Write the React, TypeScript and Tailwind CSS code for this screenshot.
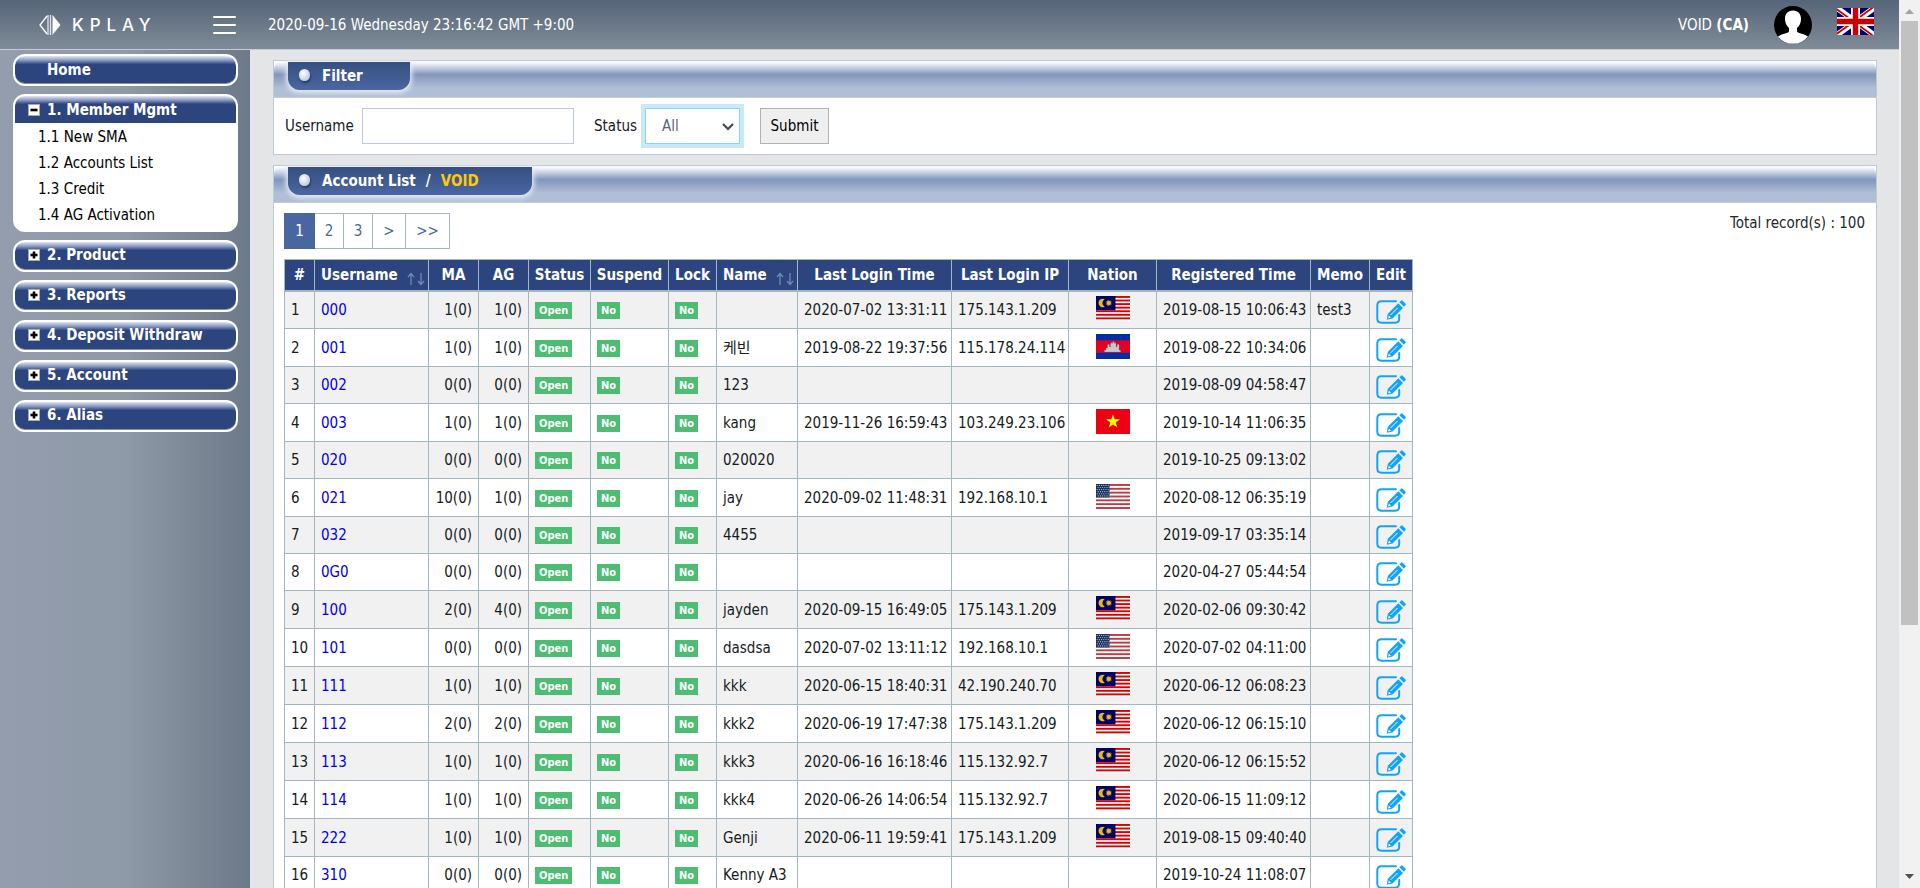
import React from "react";

type Nation = "my" | "kh" | "vn" | "us";

interface Account {
  username: string;
  ma: string;
  ag: string;
  name: string;
  loginTime?: string;
  loginIp?: string;
  nation?: Nation;
  registered: string;
  memo?: string;
}

const accounts: Account[] = [
  { username: "000", ma: "1(0)", ag: "1(0)", name: "", loginTime: "2020-07-02 13:31:11", loginIp: "175.143.1.209", nation: "my", registered: "2019-08-15 10:06:43", memo: "test3" },
  { username: "001", ma: "1(0)", ag: "1(0)", name: "케빈", loginTime: "2019-08-22 19:37:56", loginIp: "115.178.24.114", nation: "kh", registered: "2019-08-22 10:34:06" },
  { username: "002", ma: "0(0)", ag: "0(0)", name: "123", registered: "2019-08-09 04:58:47" },
  { username: "003", ma: "1(0)", ag: "1(0)", name: "kang", loginTime: "2019-11-26 16:59:43", loginIp: "103.249.23.106", nation: "vn", registered: "2019-10-14 11:06:35" },
  { username: "020", ma: "0(0)", ag: "0(0)", name: "020020", registered: "2019-10-25 09:13:02" },
  { username: "021", ma: "10(0)", ag: "1(0)", name: "jay", loginTime: "2020-09-02 11:48:31", loginIp: "192.168.10.1", nation: "us", registered: "2020-08-12 06:35:19" },
  { username: "032", ma: "0(0)", ag: "0(0)", name: "4455", registered: "2019-09-17 03:35:14" },
  { username: "0G0", ma: "0(0)", ag: "0(0)", name: "", registered: "2020-04-27 05:44:54" },
  { username: "100", ma: "2(0)", ag: "4(0)", name: "jayden", loginTime: "2020-09-15 16:49:05", loginIp: "175.143.1.209", nation: "my", registered: "2020-02-06 09:30:42" },
  { username: "101", ma: "0(0)", ag: "0(0)", name: "dasdsa", loginTime: "2020-07-02 13:11:12", loginIp: "192.168.10.1", nation: "us", registered: "2020-07-02 04:11:00" },
  { username: "111", ma: "1(0)", ag: "1(0)", name: "kkk", loginTime: "2020-06-15 18:40:31", loginIp: "42.190.240.70", nation: "my", registered: "2020-06-12 06:08:23" },
  { username: "112", ma: "2(0)", ag: "2(0)", name: "kkk2", loginTime: "2020-06-19 17:47:38", loginIp: "175.143.1.209", nation: "my", registered: "2020-06-12 06:15:10" },
  { username: "113", ma: "1(0)", ag: "1(0)", name: "kkk3", loginTime: "2020-06-16 16:18:46", loginIp: "115.132.92.7", nation: "my", registered: "2020-06-12 06:15:52" },
  { username: "114", ma: "1(0)", ag: "1(0)", name: "kkk4", loginTime: "2020-06-26 14:06:54", loginIp: "115.132.92.7", nation: "my", registered: "2020-06-15 11:09:12" },
  { username: "222", ma: "1(0)", ag: "1(0)", name: "Genji", loginTime: "2020-06-11 19:59:41", loginIp: "175.143.1.209", nation: "my", registered: "2019-08-15 09:40:40" },
  { username: "310", ma: "0(0)", ag: "0(0)", name: "Kenny A3", registered: "2019-10-24 11:08:07" },
];

const star = (cx: number, cy: number, outer: number, inner: number, points: number) =>
  Array.from({ length: points * 2 }, (_, i) => {
    const r = i % 2 ? inner : outer;
    const a = (Math.PI * i) / points - Math.PI / 2;
    return `${cx + r * Math.cos(a)},${cy + r * Math.sin(a)}`;
  }).join(" ");

function Flag({ nation }: { nation: Nation }) {
  return (
    <svg viewBox="0 0 34 25" className="mx-auto mb-0.5 block h-[25px] w-[34px]" role="img" aria-label={nation}>
      {nation === "my" && (
        <>
          <rect width="34" height="25" fill="#fff" />
          {[0, 1, 2, 3, 4, 5, 6].map((i) => (
            <rect key={i} y={i * 3.57} width="34" height="1.9" fill="#d00" />
          ))}
          <rect width="19.500" height="14.300" fill="#000066" />
          <path d="M8.800 3.200A4.300 4.300 0 1 0 8.800 10.800A4.200 4.200 0 0 1 8.800 3.200Z" fill="#e8bd10" />
          <polygon points={star(12.8, 7, 3.6, 1.8, 12)} fill="#e8bd10" />
        </>
      )}
      {nation === "kh" && (
        <>
          <rect width="34" height="25" fill="#032ea1" />
          <rect y="6.300" width="34" height="12.500" fill="#e00025" />
          <path d="M8.500 18v-2h1.500v-2h1.500v-3l1-1 1 1v2h1v-3l1-1.500.8 1V9l1-2 1 2v.5l.8-1 1 1.500v3h1v-2l1-1 1 1v3H23v2h1.500v2Z" fill="#c9c9c9" stroke="#777" strokeWidth=".3" />
        </>
      )}
      {nation === "vn" && (
        <>
          <rect width="34" height="25" fill="#ec0015" />
          <polygon points={star(17, 12.6, 7.4, 2.8, 5)} fill="#ff0" />
        </>
      )}
      {nation === "us" && (
        <>
          <rect width="34" height="25" fill="#fff" />
          {[0, 1, 2, 3, 4, 5, 6].map((i) => (
            <rect key={i} y={i * 3.84} width="34" height="1.920" fill="#bd3d44" />
          ))}
          <rect width="13.600" height="13.460" fill="#192f5d" />
          {[0, 1, 2, 3, 4, 5].map((r) =>
            [0, 1, 2, 3, 4, 5].map((c) => (
              <circle key={`${r}-${c}`} cx={1.2 + c * 2.2 + (r % 2)} cy={1.4 + r * 2.1} r=".6" fill="#b9c3d6" />
            )),
          )}
        </>
      )}
    </svg>
  );
}

function UnionJack() {
  return (
    <svg viewBox="0 0 37 27" className="block h-[27px] w-[37px]" aria-hidden="true">
      <rect width="37" height="27" fill="#000066" />
      <path d="M0 0L37 27M37 0L0 27" stroke="#fff" strokeWidth="5.600" />
      <path d="M0 0L18.500 13.500M37 27L18.500 13.500" stroke="#c00" strokeWidth="1.800" transform="translate(-.6 1)" />
      <path d="M37 0L18.500 13.500M0 27L18.500 13.500" stroke="#c00" strokeWidth="1.800" transform="translate(-.4 -1)" />
      <path d="M18.500 0V27M0 13.500H37" stroke="#fff" strokeWidth="9" />
      <path d="M18.500 0V27M0 13.500H37" stroke="#c00" strokeWidth="5.400" />
    </svg>
  );
}

function EditIcon() {
  return (
    <svg viewBox="0 0 30 26" className="block h-[26px] w-[30px]" aria-hidden="true">
      <path d="M20 2.200H5.500Q1.300 2.200 1.300 6.400V19.500Q1.300 23.700 5.500 23.700H19Q23.200 23.700 23.200 19.500V16" fill="none" stroke="#12a5f4" strokeWidth="2" strokeLinecap="round" />
      <path d="M10.800 20.800L11.800 14.800L22.300 4.200L27 8.900L16.500 19.600Z" fill="#12a5f4" />
      <path d="M23.400 3.200L25 1.700Q25.800 1 26.600 1.700L29.400 4.500Q30.100 5.300 29.400 6.100L27.900 7.800Z" fill="#12a5f4" />
      <path d="M14.500 16L21.500 9" stroke="#eef7fd" strokeWidth="1" />
      <path d="M12.800 16.600L15 18.800L12.200 19.400Z" fill="#fff" />
    </svg>
  );
}

function Toggle({ open }: { open?: boolean }) {
  return (
    <svg viewBox="0 0 12 12" className="h-3 w-3" aria-hidden="true">
      <rect x=".5" y=".5" width="11" height="11" fill="#fff" stroke="#a9a9a9" />
      <rect x="2.500" y="4.700" width="7" height="2.600" fill="#000" />
      {!open && <rect x="4.700" y="2.500" width="2.600" height="7" fill="#000" />}
    </svg>
  );
}

const menuBar =
  "flex w-full items-center bg-linear-to-b from-[#e4e8f2] from-0% via-[#8d9bc2] via-15% to-[#2c457f] to-30% text-left text-[15px] font-bold text-white";

function MenuButton({ label }: { label: string }) {
  return (
    <button type="button" className={`${menuBar} h-8 gap-[7px] rounded-xl border-2 border-white pb-0.5 pl-[13px] shadow-[inset_0_-1px_0_#8390a3]`}>
      <Toggle />
      <span>{label}</span>
    </button>
  );
}

function Sidebar() {
  return (
    <aside className="w-[250px] shrink-0 bg-linear-to-r from-[#939dae] from-0% via-[#8f9aa8] via-50% to-[#6d7988] to-100% px-3 pt-1">
      <nav className="ml-px flex flex-col gap-2">
        <a href="#home" className={`${menuBar} h-8 rounded-xl border-2 border-white pl-8 shadow-[inset_0_-1px_0_#8390a3]`}>
          Home
        </a>
        <section className="overflow-hidden rounded-xl border-2 border-white bg-white">
          <button type="button" className={`${menuBar} h-[27px] gap-[7px] pl-[13px]`}>
            <Toggle open />
            <span>1. Member Mgmt</span>
          </button>
          <ul className="pb-0.5 pl-[23px] pt-px text-[15px] leading-[26px] text-black">
            {["1.1 New SMA", "1.2 Accounts List", "1.3 Credit", "1.4 AG Activation"].map((t) => (
              <li key={t}>
                <a href="#menu" className="block">{t}</a>
              </li>
            ))}
          </ul>
        </section>
        {["2. Product", "3. Reports", "4. Deposit Withdraw", "5. Account", "6. Alias"].map((t) => (
          <MenuButton key={t} label={t} />
        ))}
      </nav>
    </aside>
  );
}

function Header() {
  return (
    <header className="flex h-[50px] shrink-0 items-center border-b border-[#c2cdd8] bg-linear-to-b from-[#566578] to-[#7f8b98] text-[15px] text-white">
      <div className="flex w-[250px] shrink-0 items-center pl-[39px]">
        <svg viewBox="0 0 22 20" className="h-5 w-[22px]" aria-hidden="true">
          <path d="M8 1L1 10L8 19" fill="none" stroke="#fff" strokeWidth="1.300" />
          <path d="M9 0V20M11.500 0V20" stroke="#fff" strokeOpacity=".8" strokeWidth="1.300" />
          <path d="M13.500 0L21.500 10L13.500 20Z" fill="#fff" />
        </svg>
        <span className="w-[100px] pl-[11px] font-['Inter',sans-serif] text-[17px] font-medium tracking-[0.35em]">KPLAY</span>
        <button type="button" aria-label="Menu" className="ml-auto mr-3.5 flex flex-col gap-1.5">
          <span className="h-0.5 w-[23px] rounded-full bg-white" />
          <span className="h-0.5 w-[23px] rounded-full bg-white" />
          <span className="h-0.5 w-[23px] rounded-full bg-white" />
        </button>
      </div>
      <p className="pl-[18px]">2020-09-16 Wednesday 23:16:42 GMT +9:00</p>
      <div className="ml-auto flex items-center pr-[25px]">
        <span>
          VOID <b>(CA)</b>
        </span>
        <svg viewBox="0 0 38 38" className="ml-[25px] h-[38px] w-[38px]" aria-hidden="true">
          <circle cx="19" cy="19" r="19" fill="#000" />
          <path d="M19 4.500C24.500 4.500 27 8.500 27 13C27 17 25 20.500 23 22V25.500C24 27.500 31 28 34 30.500A19 19 0 0 1 4 30.500C7 28 14 27.500 15 25.500V22C13 20.500 11 17 11 13C11 8.500 13.500 4.500 19 4.500Z" fill="#fff" />
        </svg>
        <button type="button" aria-label="Language" className="mb-1.5 ml-[25px]">
          <UnionJack />
        </button>
      </div>
    </header>
  );
}

function Panel({ title, wide, children }: { title: React.ReactNode; wide?: boolean; children: React.ReactNode }) {
  return (
    <section className="border border-[#bccbd7] bg-white">
      <div className="flex h-[37px] items-start rounded-t-lg border-b border-[#c2cdd8] bg-linear-to-b from-[#f6f8fb] from-5% via-[#8296bd] via-38% to-[#b0bfd5] to-75% pl-3.5 pt-px">
        <h2
          className={`flex h-7 items-center rounded-b-xl bg-linear-to-b from-[#35507f] to-[#4b66a3] pl-[11px] text-[15px] font-bold text-white shadow-[0_1px_5px_2px_#e4eaf5] ${wide ? "w-[244px]" : "w-[122px]"}`}
        >
          <span className="mb-0.5 mr-3 h-3 w-[11px] rounded-full bg-radial-[at_40%_35%] from-white to-[#a5b4d6] shadow-[1px_2px_2px_#2b3f6c]" />
          {title}
        </h2>
      </div>
      {children}
    </section>
  );
}

function SortArrows() {
  return (
    <svg viewBox="0 0 18 14" className="mt-2 h-3.5 w-[18px]" aria-hidden="true" fill="none" stroke="#7588b3" strokeWidth="1.300">
      <path d="M4 13V1.500M1 5L4 1.500L7 5M14 1V12.500M11 9L14 12.500L17 9" />
    </svg>
  );
}

const cell = "border border-[#a4b7c1] px-1.5 py-0";

function Tag({ children }: { children: React.ReactNode }) {
  return (
    <span className="inline-block h-[17px] bg-[#4dbd74] px-1 align-middle text-[11px] font-bold leading-[18px] text-white">{children}</span>
  );
}

function AccountTable() {
  return (
    <table className="w-[1129px] table-fixed border-collapse whitespace-nowrap text-[15px] text-[#151b1e]">
      <colgroup>
        <col className="w-[30px]" />
        <col className="w-[114px]" />
        <col className="w-[50px]" />
        <col className="w-[50px]" />
        <col className="w-[62px]" />
        <col className="w-[78px]" />
        <col className="w-[48px]" />
        <col className="w-[81px]" />
        <col className="w-[154px]" />
        <col className="w-[117px]" />
        <col className="w-[88px]" />
        <col className="w-[154px]" />
        <col className="w-[59px]" />
        <col className="w-[43px]" />
      </colgroup>
      <thead>
        <tr className="h-[31px] bg-[#2c457f] text-white">
          {["#", "Username", "MA", "AG", "Status", "Suspend", "Lock", "Name", "Last Login Time", "Last Login IP", "Nation", "Registered Time", "Memo", "Edit"].map((h) => (
            <th key={h} scope="col" className="border border-b-2 border-[#a4b7c1] p-0 text-center font-bold">
              {h === "Username" || h === "Name" ? (
                <button type="button" className="flex w-full items-center justify-between pl-1.5 pr-[3px]">
                  {h}
                  <SortArrows />
                </button>
              ) : (
                h
              )}
            </th>
          ))}
        </tr>
      </thead>
      <tbody>
        {accounts.map((a, i) => (
          <tr key={a.username} className={`odd:bg-[#f1f1f1] ${a.nation ? "h-[38px]" : "h-[37px]"}`}>
            <td className={cell}>{i + 1}</td>
            <td className={cell}>
              <a href="#account" className="text-[#0000ee]">{a.username}</a>
            </td>
            <td className={`${cell} text-right`}>{a.ma}</td>
            <td className={`${cell} text-right`}>{a.ag}</td>
            <td className={cell}><Tag>Open</Tag></td>
            <td className={cell}><Tag>No</Tag></td>
            <td className={cell}><Tag>No</Tag></td>
            <td className={cell}>{a.name}</td>
            <td className={cell}>{a.loginTime}</td>
            <td className={cell}>{a.loginIp}</td>
            <td className={cell}>{a.nation && <Flag nation={a.nation} />}</td>
            <td className={cell}>{a.registered}</td>
            <td className={cell}>{a.memo}</td>
            <td className="border border-[#a4b7c1] p-0 pl-1.5">
              <button type="button" aria-label={`Edit ${a.username}`} className="mt-1 block">
                <EditIcon />
              </button>
            </td>
          </tr>
        ))}
      </tbody>
    </table>
  );
}

function Pagination() {
  return (
    <nav aria-label="Pages" className="flex h-9 border border-[#a4b7c1] text-[15px] text-[#4a66a0]">
      <a href="#p1" className="-my-px -ml-px flex w-[31px] items-center justify-center bg-[#4a66a0] text-white">1</a>
      <a href="#p2" className="flex w-[29px] items-center justify-center border-r border-[#a4b7c1]">2</a>
      <a href="#p3" className="flex w-[29px] items-center justify-center border-r border-[#a4b7c1]">3</a>
      <a href="#next" className="flex w-[33px] items-center justify-center border-r border-[#a4b7c1]">&gt;</a>
      <a href="#last" className="flex w-[43px] items-center justify-center">&gt;&gt;</a>
    </nav>
  );
}

function Scrollbar() {
  return (
    <div className="flex w-[21px] shrink-0 flex-col items-center bg-[#f1f1f1]" aria-hidden="true">
      <svg viewBox="0 0 17 21" className="h-[21px] w-[17px] shrink-0"><path d="M4 14L8.500 9L13 14Z" fill="#a3a3a3" /></svg>
      <div className="h-[68%] w-[17px] bg-[#c1c1c1]" />
      <svg viewBox="0 0 17 21" className="mt-auto h-[21px] w-[17px] shrink-0"><path d="M4 7L8.500 12L13 7Z" fill="#505050" /></svg>
    </div>
  );
}

export default function App() {
  return (
    <div className="flex h-screen overflow-hidden bg-[#e4e5e6] font-['DejaVu_Sans_Condensed','Noto_Sans','Noto_Sans_CJK_KR',sans-serif] leading-5">
      <div className="flex min-w-0 flex-1 flex-col">
        <Header />
        <div className="flex min-h-0 flex-1">
          <Sidebar />
          <main className="flex min-w-0 flex-1 flex-col gap-2.5 overflow-hidden pl-[23px] pr-[22px] pt-2.5">
            <Panel title="Filter">
              <form className="flex items-center px-[11px] py-2.5 text-[15px] text-[#151b1e]">
                <label htmlFor="username" className="w-[77px]">Username</label>
                <input id="username" type="text" className="h-9 w-[212px] border border-[#bccbd7] bg-white px-2 outline-none" />
                <label htmlFor="status" className="ml-5 w-[51px]">Status</label>
                <div className="relative">
                  <select id="status" className="block h-9 w-[95px] appearance-none border border-[#8ad4ee] bg-white pl-4 text-[#5c6873] shadow-[0_0_0_4px_#c8e9f5] outline-none">
                    <option>All</option>
                  </select>
                  <svg viewBox="0 0 12 8" className="pointer-events-none absolute right-1.5 top-[15px] h-2 w-3" aria-hidden="true">
                    <path d="M1 1L6 6L11 1" fill="none" stroke="#3f4a55" strokeWidth="2.200" />
                  </svg>
                </div>
                <button type="button" className="ml-5 h-9 w-[69px] border border-[#b2b2b2] bg-[#efefef] text-black">Submit</button>
              </form>
            </Panel>
            <Panel
              wide
              title={
                <span className="flex gap-2.5">
                  <span>Account List</span>
                  <span>/</span>
                  <span className="text-[#ffc90e]">VOID</span>
                </span>
              }
            >
              <div className="px-2.5 pt-2.5">
                <div className="mb-2.5 flex items-start justify-between">
                  <Pagination />
                  <p className="pr-px text-[15px] text-[#23282c]">Total record(s) : 100</p>
                </div>
                <AccountTable />
              </div>
            </Panel>
          </main>
        </div>
      </div>
      <Scrollbar />
    </div>
  );
}
